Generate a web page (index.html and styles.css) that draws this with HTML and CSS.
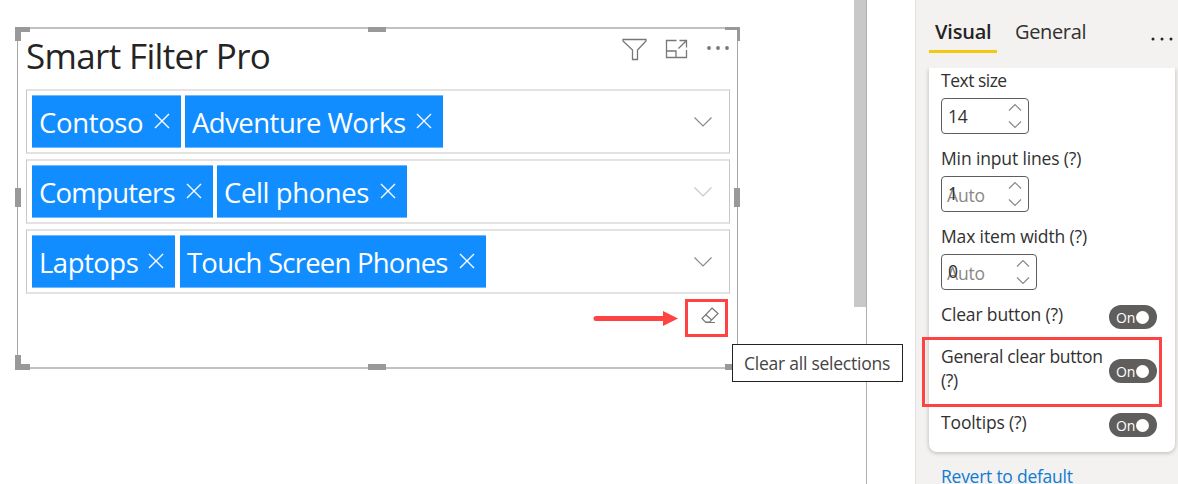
FILE: index.html
```html
<!DOCTYPE html>
<html lang="en">
<head>
<meta charset="utf-8">
<title>Smart Filter Pro</title>
<link rel="stylesheet" href="styles.css">
</head>
<body>
<div class="app">
  <main class="canvas">
    <section class="visual">
      <i class="handle tl-h"></i><i class="handle tl-v"></i>
      <i class="handle tr-h"></i><i class="handle tr-v"></i>
      <i class="handle bl-h"></i><i class="handle bl-v"></i>
      <i class="handle br-h"></i>
      <i class="handle mid-t"></i><i class="handle mid-b"></i>
      <i class="handle mid-l"></i><i class="handle mid-r"></i>
      <header class="visual-head">
        <h1 class="title">Smart Filter Pro</h1>
        <div class="tools">
          <svg class="tool" width="26" height="24" viewBox="0 0 26 24"><path d="M1 1.500H24V3L15.500 12V21.500H10.500V12L1 3Z"/></svg>
          <svg class="tool" width="24" height="24" viewBox="0 0 24 24"><path d="M11.500 2.500H1.500V19.500H21.500V12M1.500 13H11V19.500M14.500 2.500H21.500V9.500M13.500 10.500L21.500 2.500"/></svg>
          <svg class="dots" width="24" height="24" viewBox="0 0 24 24"><circle cx="3" cy="10" r="1.900"/><circle cx="12" cy="10" r="1.900"/><circle cx="21" cy="10" r="1.900"/></svg>
        </div>
      </header>
      <div class="slots">
        <div class="slot">
          <span class="chip w-contoso"><span>Contoso</span><svg class="x" width="16" height="16" viewBox="0 0 16 16"><path d="M1 1L15 15M15 1L1 15"/></svg></span>
          <span class="chip w-adventure"><span>Adventure Works</span><svg class="x" width="16" height="16" viewBox="0 0 16 16"><path d="M1 1L15 15M15 1L1 15"/></svg></span>
          <svg class="chev" width="18" height="10" viewBox="0 0 18 10"><path d="M.5 .5L9 9L17.500 .5"/></svg>
        </div>
        <div class="slot">
          <span class="chip w-computers"><span>Computers</span><svg class="x" width="16" height="16" viewBox="0 0 16 16"><path d="M1 1L15 15M15 1L1 15"/></svg></span>
          <span class="chip w-cell"><span>Cell phones</span><svg class="x" width="16" height="16" viewBox="0 0 16 16"><path d="M1 1L15 15M15 1L1 15"/></svg></span>
          <svg class="chev pale" width="18" height="10" viewBox="0 0 18 10"><path d="M.5 .5L9 9L17.500 .5"/></svg>
        </div>
        <div class="slot">
          <span class="chip w-laptops"><span>Laptops</span><svg class="x" width="16" height="16" viewBox="0 0 16 16"><path d="M1 1L15 15M15 1L1 15"/></svg></span>
          <span class="chip w-touch"><span>Touch Screen Phones</span><svg class="x" width="16" height="16" viewBox="0 0 16 16"><path d="M1 1L15 15M15 1L1 15"/></svg></span>
          <svg class="chev" width="18" height="10" viewBox="0 0 18 10"><path d="M.5 .5L9 9L17.500 .5"/></svg>
        </div>
      </div>
      <div class="clear-row">
        <svg class="arrow" width="86" height="16" viewBox="0 0 86 16"><path d="M3 8.500H72" stroke="#ff4343" stroke-width="5" stroke-linecap="round"/><path d="M70 1L85 8.500L70 16Z" fill="#ff4343"/></svg>
        <div class="clear-box"><svg width="18" height="17" viewBox="0 0 18 17"><path d="M11 1L17 6.500L8.500 15.200H4.500L1 11.500ZM4.800 7.700L11 13.200M4.500 15.500H14"/></svg></div>
      </div>
    </section>
    <div class="scroll"></div>
    <div class="tooltip">Clear all selections</div>
  </main>
  <aside class="pane">
    <nav class="tabs">
      <span class="tab active">Visual</span>
      <span class="tab">General</span>
      <svg class="more" width="24" height="6" viewBox="0 0 24 6"><circle cx="2" cy="3" r="1.500"/><circle cx="11" cy="3" r="1.500"/><circle cx="20" cy="3" r="1.500"/></svg>
    </nav>
    <div class="card">
      <div class="field">
        <span class="tight">Text size</span>
        <div class="num"><span class="val">14</span><svg class="spin" width="14" height="26" viewBox="0 0 14 26"><path d="M1 7.500L7 1.500L13 7.500M1 18.500L7 24.500L13 18.500"/></svg></div>
      </div>
      <div class="field">
        <span>Min input lines (?)</span>
        <div class="num"><span class="over">1</span><span class="auto">Auto</span><svg class="spin" width="14" height="26" viewBox="0 0 14 26"><path d="M1 7.500L7 1.500L13 7.500M1 18.500L7 24.500L13 18.500"/></svg></div>
      </div>
      <div class="field">
        <span>Max item width (?)</span>
        <div class="num wide"><span class="over">0</span><span class="auto">Auto</span><svg class="spin" width="14" height="26" viewBox="0 0 14 26"><path d="M1 7.500L7 1.500L13 7.500M1 18.500L7 24.500L13 18.500"/></svg></div>
      </div>
      <div class="option"><span>Clear button (?)</span><span class="toggle"><span class="on">On</span><i class="knob"></i></span></div>
      <div class="option tall"><span class="general">General clear button (?)</span><span class="toggle"><span class="on">On</span><i class="knob"></i></span><div class="mark"></div></div>
      <div class="option"><span>Tooltips (?)</span><span class="toggle"><span class="on">On</span><i class="knob"></i></span></div>
    </div>
    <a class="revert">Revert to default</a>
  </aside>
</div>
</body>
</html>
```
FILE: styles.css
```css
* { box-sizing: border-box; }
body { margin: 0; font-family: "Open Sans", "Noto Sans", sans-serif; color: #323130; background: #fff; }
svg { display: block; fill: none; flex: none; }
.app { display: flex; width: 1178px; height: 484px; overflow: hidden; }
.canvas { position: relative; display: flex; justify-content: space-between; width: 915px; padding-right: 48px; }
.visual { position: relative; width: 721px; height: 342px; margin: 27px 0 0 17px; padding: 0 7px 0 8px; border: solid #a6a6a6; border-width: 2px 1px; border-top-color: #c1c1c1; border-bottom-color: #c1c1c1; }
.handle { position: absolute; background: #999; }
.tl-h { left: -3px; top: -2px; width: 15px; height: 5px; }
.tl-v { left: -3px; top: -2px; width: 6px; height: 14px; }
.tr-h { right: -3px; top: -2px; width: 15px; height: 3px; }
.tr-v { right: -3px; top: -2px; width: 3px; height: 14px; }
.bl-h { left: -3px; bottom: -3px; width: 15px; height: 6px; }
.bl-v { left: -3px; bottom: -3px; width: 6px; height: 15px; }
.br-h { right: -3px; bottom: -3px; width: 15px; height: 6px; }
.mid-t { left: 350px; top: -2px; width: 18px; height: 5px; }
.mid-b { left: 350px; bottom: -3px; width: 18px; height: 6px; }
.mid-l { left: -3px; top: 159px; width: 6px; height: 19px; }
.mid-r { right: -3px; top: 159px; width: 6px; height: 19px; }
.visual-head { display: flex; justify-content: space-between; height: 60px; }
.title { margin: 3px 0 0; font-size: 35px; line-height: 48px; font-weight: 400; letter-spacing: -.65px; color: #252423; white-space: nowrap; }
.tools { display: flex; gap: 17px; margin-top: 9px; }
.tool { stroke: #777; stroke-width: 1.3; }
.dots { fill: #777; }
.slots { display: flex; flex-direction: column; gap: 5px; }
.slot { display: flex; align-items: center; height: 65px; padding: 0 17px 0 5px; border: solid #e3e3e3; border-width: 2px 1px; border-left-color: #c8c8c8; border-right-color: #c8c8c8; }
.chip { display: flex; align-items: center; justify-content: space-between; height: 53px; padding: 2px 11px 0 7px; margin-right: 4px; border: solid #6cb9ff; border-width: 1px 0; background: #118dff; color: #fff; font-size: 27.5px; white-space: nowrap; }
.w-contoso { width: 149px; letter-spacing: -.35px; }
.w-adventure { width: 258px; letter-spacing: -.53px; }
.w-computers { width: 181px; letter-spacing: -.75px; }
.w-cell { width: 190px; letter-spacing: -.4px; }
.w-laptops { width: 143px; margin-right: 5px; letter-spacing: -.5px; }
.w-touch { width: 306px; letter-spacing: -.78px; }
.x { stroke: #fff; stroke-width: 1.4; margin-bottom: 3px; }
.chev { margin-left: auto; stroke: #8a8a8a; stroke-width: 1.2; }
.pale { stroke: #c8c8c8; }
.clear-row { display: flex; justify-content: flex-end; align-items: center; gap: 6px; margin: 5px 2px 0 0; }
.clear-box { width: 43px; height: 38px; padding: 5px 0 0 13px; border: 3px solid #ff4343; }
.clear-box svg { stroke: #777; stroke-width: 1.2; }
.scroll { width: 13px; height: 484px; border-right: 1px solid #b0b0b0; background: linear-gradient(#c8c8c8, #c8c8c8) 0 0 / 12px 307px no-repeat; }
.tooltip { position: absolute; left: 732px; top: 344px; width: 171px; height: 38px; padding-left: 11px; border: 1px solid #222; background: #fff; font-size: 17.5px; line-height: 37px; letter-spacing: -.24px; color: #444; white-space: nowrap; }
.pane { width: 263px; padding: 0 3px 0 13px; border-left: 1px solid #e1dfdd; background: #f3f2f1; font-size: 17.5px; letter-spacing: -.14px; }
.tabs { display: flex; height: 68px; padding-top: 13px; }
.tab { height: 40px; padding: 0 6px; margin-right: 12px; font-size: 20px; line-height: 38px; letter-spacing: -.35px; }
.active { width: 68px; border-bottom: 3px solid #f2c811; font-weight: 600; letter-spacing: -.2px; color: #252423; }
.more { fill: #252423; margin: 23px 0 0 auto; }
.card { height: 384px; padding: 0 18px 0 12px; border-radius: 0 0 8px 8px; background: #fff; box-shadow: 0 1px 4px rgba(0,0,0,.25); clip-path: inset(0 -8px -8px -8px); }
.field { height: 78px; padding-bottom: 12px; line-height: 25px; }
.tight { letter-spacing: -.5px; }
.num { display: flex; align-items: center; justify-content: space-between; position: relative; width: 88px; height: 36px; margin-top: 5px; padding: 0 6px 0 5px; border: 1px solid #605e5c; border-radius: 4px; }
.wide { width: 96px; }
.val { padding-left: 1px; }
.auto { padding-top: 3px; color: #8a8886; }
.over { position: absolute; left: 6px; top: 4px; }
.spin { stroke: #8a8886; stroke-width: 1.2; }
.option { position: relative; display: flex; justify-content: space-between; line-height: 24px; height: 42px; }
.tall { height: 66px; }
.general { width: 166px; letter-spacing: -.33px; }
.toggle { flex: none; display: flex; align-items: center; justify-content: space-between; width: 48px; height: 24px; margin-top: 3px; padding: 0 8px 0 7px; border-radius: 12px; background: #605e5c; color: #fff; font-size: 14px; }
.on { padding-top: 2px; }
.tall .toggle { margin-top: 15px; }
.knob { width: 13px; height: 13px; border-radius: 50%; background: #fff; }
.mark { position: absolute; left: -19px; top: -7px; width: 240px; height: 70px; border: 3px solid #ff4343; }
.revert { display: block; margin: 12px 0 0 12px; line-height: 24px; letter-spacing: -.25px; color: #117ad1; }
```
